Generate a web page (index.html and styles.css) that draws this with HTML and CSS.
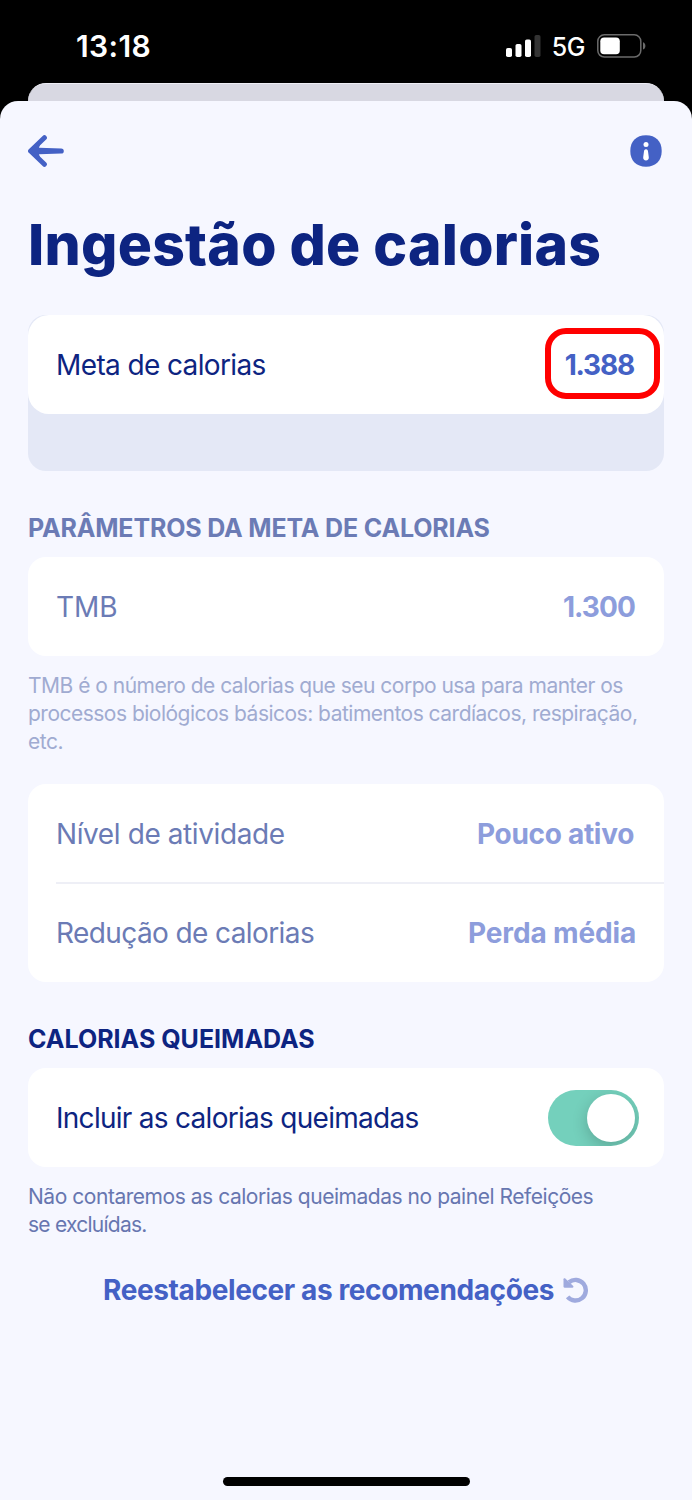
FILE: index.html
```html
<!DOCTYPE html>
<html lang="pt-BR">
<head>
  <meta charset="UTF-8">
  <meta name="viewport" content="width=device-width, initial-scale=1.0">
  <title>Ingestão de calorias</title>
  <link rel="stylesheet" href="styles.css">
</head>
<body>

<div class="status-bar">
  <span class="hora">13:18</span>
  <div class="status-icons">
    <svg class="sinal" width="35" height="22" viewBox="0 0 35 22">
      <rect x="0" y="13" width="6" height="9" rx="1.8" fill="#fff"/>
      <rect x="9.5" y="9" width="6" height="13" rx="1.8" fill="#fff"/>
      <rect x="19" y="4.5" width="6" height="17.5" rx="1.8" fill="#fff"/>
      <rect x="28.5" y="0" width="6" height="22" rx="1.8" fill="#333"/>
    </svg>
    <span class="rede">5G</span>
    <svg class="bateria" width="49" height="24" viewBox="0 0 49 24">
      <rect x="0.8" y="0.8" width="43" height="22.2" rx="6.5" fill="none" stroke="#6b6b6b" stroke-width="1.5"/>
      <rect x="3.3" y="3.5" width="19.5" height="16.7" rx="3.8" fill="#fff"/>
      <path d="M46 8.3c3.2 1.2 3.2 6 0 7.2z" fill="#6b6b6b"/>
    </svg>
  </div>
</div>

<div class="sheet-back"></div>

<main class="sheet">
  <nav class="nav">
    <svg width="36" height="32" viewBox="0 0 36 32">
      <path d="M2.600 16 16.400 2.700M2.600 16 16.400 29.300" fill="none" stroke="#4461c5" stroke-width="5" stroke-linecap="round"/>
      <path d="M1 14.500 13 6 11 12.700 33.200 13.400a2.600 2.600 0 0 1 0 5.200L11 19.300 13 26 1 17.500z" fill="#4461c5"/>
    </svg>
    <svg width="32" height="32" viewBox="0 0 32 32">
      <path d="M16 .3C25.800 .3 31.700 6.200 31.700 16S25.800 31.700 16 31.700 .3 25.800 .3 16 6.200 .3 16 .3z" fill="#4461c5"/>
      <circle cx="16" cy="9.500" r="2.500" fill="#fff"/>
      <path d="M16 14.300c1.500 0 1.900 1 2.100 2.700l.7 5.300c.3 2-1.100 3.200-2.800 3.200s-3.100-1.200-2.800-3.200l.7-5.300c.2-1.700.6-2.700 2.100-2.700z" fill="#fff"/>
    </svg>
  </nav>

  <h1>Ingestão de calorias</h1>

  <div class="meta">
    <div class="card card-meta">
      <div class="row">
        <span class="label l-meta">Meta de calorias</span>
        <span class="valor v-meta">1.388</span>
        <span class="destaque"></span>
      </div>
    </div>
  </div>

  <h2 class="h-param">PARÂMETROS DA META DE CALORIAS</h2>
  <div class="card inativo">
    <div class="row">
      <span class="label">TMB</span>
      <span class="valor v-tmb">1.300</span>
    </div>
  </div>
  <p class="nota nota-clara">TMB é o número de calorias que seu corpo usa para manter os<br>processos biológicos básicos: batimentos cardíacos, respiração,<br>etc.</p>

  <div class="card inativo">
    <div class="row">
      <span class="label l-nivel">Nível de atividade</span>
      <span class="valor v-nivel">Pouco ativo</span>
    </div>
    <div class="row com-linha">
      <span class="label l-reducao">Redução de calorias</span>
      <span class="valor v-reducao">Perda média</span>
    </div>
  </div>

  <h2 class="h-queima">CALORIAS QUEIMADAS</h2>
  <div class="card">
    <div class="row row-switch">
      <span class="label l-incluir">Incluir as calorias queimadas</span>
      <span class="switch"></span>
    </div>
  </div>
  <p class="nota">Não contaremos as calorias queimadas no painel Refeições<br><span class="nota-fim">se excluídas.</span></p>

  <button class="btn-reset" type="button">
    <span>Reestabelecer as recomendações</span>
    <svg width="26" height="26" viewBox="0 0 26 26">
      <path d="M6 5.200A10.300 10.300 0 1 1 4.600 19.800" fill="none" stroke="#9faade" stroke-width="4.400"/>
      <path d="M.5 2.300c0-1.200 1-1.500 1.800-.8L10 8.700c.9.900.5 2-.7 2H1.600C.8 10.700.5 10.300.5 9.600z" fill="#9faade"/>
    </svg>
  </button>

  <div class="home-indicator"></div>
</main>

</body>
</html>
```
FILE: styles.css
```css
* {
  box-sizing: border-box;
  margin: 0;
  padding: 0;
}

body {
  background-color: #000;
  font-family: 'Inter', sans-serif;
  color: #0d2481;
  height: 1500px;
  display: flex;
  flex-direction: column;
  overflow: hidden;
}

.status-bar {
  height: 83px;
  padding: 9px 46px 0 76px;
  display: flex;
  justify-content: space-between;
  align-items: center;
  color: #fff;
}

.hora {
  font-size: 30px;
  font-weight: 600;
  letter-spacing: 0.4px;
}

.status-icons {
  display: flex;
  align-items: center;
}

.rede {
  font-size: 25px;
  font-weight: 500;
  margin: 2px 12px 0 11px;
  letter-spacing: -0.5px;
}

.sheet-back {
  height: 36px;
  margin: 0 28px -18px;
  border-radius: 18px 18px 0 0;
  background-color: #d8d8e2;
  border-top: 1px solid #eeeef6;
  flex-shrink: 0;
}

.sheet {
  flex: 1;
  position: relative;
  background-color: #f6f7ff;
  border-radius: 18px 18px 0 0;
  padding: 0 28px 14px;
  display: flex;
  flex-direction: column;
}

.nav {
  height: 99px;
  display: flex;
  justify-content: space-between;
  align-items: center;
  padding-right: 2px;
}

h1 {
  font-size: 57px;
  line-height: 70px;
  font-weight: 800;
  letter-spacing: 0.25px;
  white-space: nowrap;
  margin: 10px 0 35px;
}

h2 {
  font-size: 25px;
  line-height: 30px;
  font-weight: 700;
  white-space: nowrap;
}

.meta {
  background-color: #e4e8f6;
  border-radius: 18px;
  padding-bottom: 57px;
  margin-bottom: 42px;
}

.card {
  background-color: #fff;
  border-radius: 18px;
}

.card-meta {
  border-radius: 21px;
}

.row {
  position: relative;
  height: 99px;
  padding: 0 28px;
  display: flex;
  justify-content: space-between;
  align-items: center;
  white-space: nowrap;
  font-size: 28px;
}

.com-linha::before {
  content: '';
  position: absolute;
  top: -1px;
  left: 28px;
  right: 0;
  height: 2px;
  background-color: #eeeff6;
}

.row-switch {
  padding-right: 25px;
}

.valor {
  font-weight: 700;
  color: #4461c5;
}

.inativo .label {
  color: #6b7bb5;
}

.inativo .valor {
  color: #8d9ddc;
}

.l-meta {
  letter-spacing: -0.62px;
}

.l-nivel {
  letter-spacing: -0.4px;
}

.l-reducao {
  letter-spacing: -0.6px;
}

.l-incluir {
  letter-spacing: -0.72px;
}

.v-meta {
  letter-spacing: -1.2px;
  margin-right: 2px;
}

.v-tmb {
  letter-spacing: -0.9px;
  margin-right: 1px;
}

.v-nivel {
  letter-spacing: -0.3px;
  margin-right: 2px;
}

.v-reducao {
  letter-spacing: -0.15px;
}

/* contorno vermelho sobre o valor da meta */
.destaque {
  position: absolute;
  top: 13px;
  right: 4px;
  width: 115px;
  height: 71px;
  border: 6px solid #ff0000;
  border-radius: 21px;
}

.h-param {
  color: #6b7bb5;
  letter-spacing: -0.16px;
  margin-bottom: 14px;
}

.h-queima {
  margin: 42px 0 14px;
}

.nota {
  font-size: 21px;
  line-height: 28px;
  color: #6776b0;
  letter-spacing: -0.46px;
  white-space: nowrap;
  margin-top: 16px;
}

.nota-clara {
  color: #a0abd1;
  letter-spacing: -0.51px;
  margin-bottom: 28px;
}

.nota-fim {
  letter-spacing: -0.75px;
}

.switch {
  width: 91px;
  height: 56px;
  border-radius: 28px;
  background-color: #74d0bc;
  padding: 4px;
  display: flex;
  justify-content: flex-end;
  overflow: hidden;
}

.switch::after {
  content: '';
  width: 48px;
  height: 48px;
  border-radius: 50%;
  background-color: #fff;
  box-shadow: 0 5px 16px rgba(0, 0, 0, 0.2);
}

.btn-reset {
  border: none;
  background: none;
  font-family: inherit;
  font-size: 28px;
  line-height: 34px;
  font-weight: 700;
  letter-spacing: -0.39px;
  color: #4461c5;
  white-space: nowrap;
  display: flex;
  justify-content: center;
  align-items: center;
  gap: 9px;
  margin-top: 34px;
}

.home-indicator {
  width: 247px;
  height: 9px;
  border-radius: 5px;
  background-color: #000;
  margin: auto auto 0;
}
```
